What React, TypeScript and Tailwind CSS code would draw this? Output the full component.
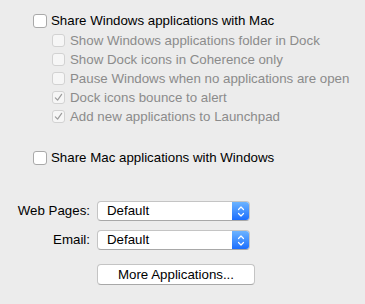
const font = { fontFamily: '"Liberation Sans", Arial, sans-serif' };

function Check({ checked = false, disabled = false }: { checked?: boolean; disabled?: boolean }) {
    return (
        <span
            className={`flex items-center justify-center rounded-[3px] border shrink-0 ${disabled
                ? 'w-[13px] h-[13px] bg-[#f6f6f6] border-[#d2d2d2]'
                : 'w-[14px] h-[14px] bg-white border-[#a9a9a9]'
                }`}
        >
            {checked && (
                <svg className="w-[9px] h-[9px]" viewBox="0 0 10 10" fill="none">
                    <path d="M1.5 5.5 L4 8 L8.5 1.5" stroke="#9b9b9b" strokeWidth={1.3} strokeLinecap="round" strokeLinejoin="round" />
                </svg>
            )}
        </span>
    );
}

function Popup({ value }: { value: string }) {
    return (
        <div className="flex w-[153px] h-[20px] rounded-[4px] bg-white border border-[#c4c4c4] border-b-[#a8a8a8] overflow-hidden">
            <span className="flex-1 pl-[9px] text-[13.3px] leading-[18px] text-black">{value}</span>
            <span className="w-[17px] h-full flex items-center justify-center bg-gradient-to-b from-[#6cb3ff] to-[#1b6dfd]">
                <svg className="w-[8px] h-[13px]" viewBox="0 0 8 13" fill="none">
                    <path d="M1.5 4.5 L4 2 L6.5 4.5 M1.5 8.5 L4 11 L6.5 8.5" stroke="white" strokeWidth={1.2} strokeLinecap="round" strokeLinejoin="round" />
                </svg>
            </span>
        </div>
    );
}

const subOptions = [
    { label: 'Show Windows applications folder in Dock', checked: false },
    { label: 'Show Dock icons in Coherence only', checked: false },
    { label: 'Pause Windows when no applications are open', checked: false },
    { label: 'Dock icons bounce to alert', checked: true },
    { label: 'Add new applications to Launchpad', checked: true },
];

export default function App() {
    return (
        <div className="w-[365px] h-[304px] bg-[#ececec] pt-[14px] overflow-hidden" style={font}>
            {/* Checkbox group */}
            <div className="pl-[33px]">
                <label className="flex items-center gap-[4px] h-[14px]">
                    <Check />
                    <span className="text-[13.3px] text-black">Share Windows applications with Mac</span>
                </label>

                <div className="mt-[3px] pl-[19px] flex flex-col">
                    {subOptions.map((o) => (
                        <label key={o.label} className="flex items-center gap-[5px] h-[19px]">
                            <Check checked={o.checked} disabled />
                            <span className="text-[13.3px] text-[#8b8b8b]">{o.label}</span>
                        </label>
                    ))}
                </div>

                <label className="mt-[25px] flex items-center gap-[4px] h-[14px]">
                    <Check />
                    <span className="text-[13.3px] text-black">Share Mac applications with Windows</span>
                </label>
            </div>

            {/* Default apps */}
            <div className="mt-[36px] grid grid-cols-[90px_auto] gap-x-[7px] gap-y-[9px] items-center justify-start">
                <span className="text-[13.3px] text-black text-right">Web Pages:</span>
                <Popup value="Default" />
                <span className="text-[13.3px] text-black text-right">Email:</span>
                <Popup value="Default" />
            </div>

            <button className="ml-[97px] mt-[14px] w-[158px] h-[21px] rounded-[4px] bg-white border border-[#c4c4c4] border-b-[#a8a8a8] text-[13.3px] text-black leading-[19px]">
                More Applications...
            </button>
        </div>
    );
}
